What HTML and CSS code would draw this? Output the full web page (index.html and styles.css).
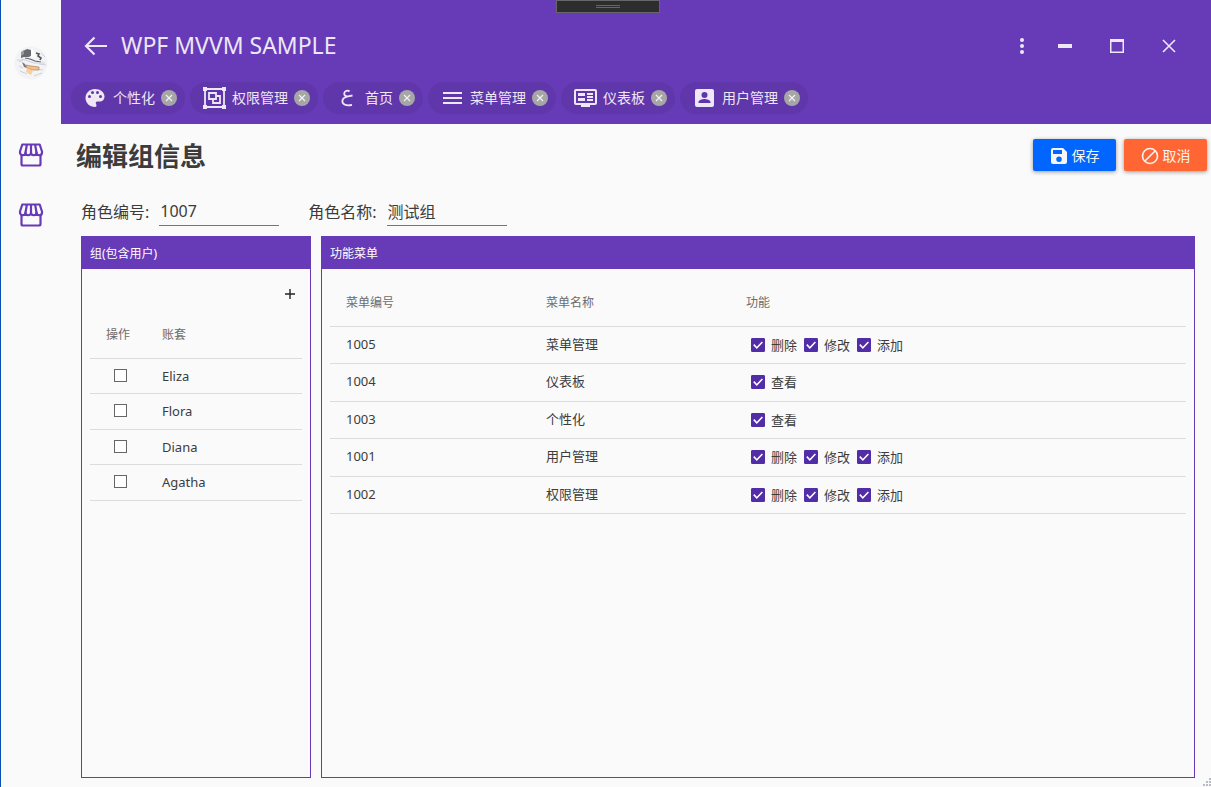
FILE: index.html
```html
<!DOCTYPE html>
<html lang="zh-CN">
<head>
<meta charset="utf-8">
<meta name="viewport" content="width=device-width, initial-scale=1">
<title>WPF MVVM SAMPLE</title>
<link rel="stylesheet" href="styles.css">
</head>
<body>
<svg class="sprite" aria-hidden="true">
  <symbol id="store" viewBox="0 0 26 26">
    <g fill="none" stroke="currentColor" stroke-width="2.200" stroke-linejoin="round" stroke-linecap="round">
      <path d="M4.300 2.500H21.700L24 9.500V10.500A2.750 2.750 0 0 1 18.500 10.500A2.750 2.750 0 0 1 13 10.500A2.750 2.750 0 0 1 7.500 10.500A2.750 2.750 0 0 1 2 10.500V9.500Z"/>
      <path d="M8.800 3L7.500 10.500M13 3V10.500M17.200 3L18.500 10.500M3.500 13V22Q3.500 23.500 5 23.500H21Q22.500 23.500 22.500 22V13"/>
    </g>
  </symbol>
  <symbol id="close" viewBox="0 0 16 16">
    <circle cx="8" cy="8" r="8" fill="#a6a6a6"/>
    <path d="M5 5L11 11M11 5L5 11" stroke="#f2f2f2" stroke-width="1.200" fill="none"/>
  </symbol>
</svg>

<div class="debug-bar"><span class="debug-grip"></span></div>

<div class="shell">
  <nav class="sidebar" aria-label="导航">
    <svg class="avatar" viewBox="0 0 34 34" aria-hidden="true">
      <circle cx="17" cy="17" r="16.500" fill="#f3f3f6"/>
      <path d="M7 9L9 5L13 3L17 4L18 9L15 11L10 11L7 12Z" fill="#6a6b70"/>
      <path d="M7 6L10 4L10 8L7 10Z" fill="#9a9ca2"/>
      <path d="M17 3L20 4L22 12L17 11Z" fill="#fff"/>
      <path d="M11 12L16 13L21 15L27 16" stroke="#5f6167" stroke-width="1.200" fill="none"/>
      <path d="M22 7L25 8L24 10L27 12L26 14" stroke="#55575c" stroke-width="1.600" fill="none"/>
      <path d="M8 16L11 18L13 22L10 21Z" fill="#77787c"/>
      <path d="M3 14L9 14L5 16M8 13L20 17L31 17M5 20L9 22M25 18L32 19M6 25L13 28M20 30L28 27M27 7L31 11M22 23L29 24" stroke="#cdd0dd" stroke-width="1" fill="none"/>
      <path d="M12 19L17 20L25 21V24L19 24L13 22Z" fill="#f8c080" stroke="#a5886b" stroke-width=".700"/>
      <path d="M13 22L19 25L17 29L12 26Z" fill="#f9d09a"/>
    </svg>
    <button class="nav-btn" type="button" aria-label="模块一"><svg><use href="#store"/></svg></button>
    <button class="nav-btn" type="button" aria-label="模块二"><svg><use href="#store"/></svg></button>
  </nav>

  <div class="main">
    <header class="header">
      <div class="title-bar">
        <button class="icon-btn back" type="button" aria-label="返回">
          <svg viewBox="0 0 24 24"><path d="M23 12H2M10.500 3.500L2 12L10.500 20.500" fill="none" stroke="currentColor" stroke-width="2.200"/></svg>
        </button>
        <h1 class="app-title">WPF MVVM SAMPLE</h1>
        <div class="window-controls">
          <button class="icon-btn more" type="button" aria-label="更多"><svg viewBox="0 0 24 24"><g fill="currentColor"><circle cx="12" cy="6" r="2"/><circle cx="12" cy="12" r="2"/><circle cx="12" cy="18" r="2"/></g></svg></button>
          <button class="icon-btn" type="button" aria-label="最小化"><svg viewBox="0 0 24 24"><path d="M5 10H19V14H5Z" fill="currentColor"/></svg></button>
          <button class="icon-btn" type="button" aria-label="最大化"><svg viewBox="0 0 24 24"><path d="M5 5H19V19H5ZM6.500 8V17.500H17.500V8Z" fill="currentColor" fill-rule="evenodd"/></svg></button>
          <button class="icon-btn" type="button" aria-label="关闭"><svg viewBox="0 0 24 24"><path d="M6 6L18 18M18 6L6 18" fill="none" stroke="currentColor" stroke-width="1.600"/></svg></button>
        </div>
      </div>
      <div class="chips">
        <div class="chip">
          <svg class="chip-icon" viewBox="0 0 24 24"><path fill="currentColor" fill-rule="evenodd" d="M12 3C6.500 3 2.500 7 2.500 12S6.800 21 12 21C13 21 13.500 20.200 13.500 19.500C13.500 18.300 12.800 18 12.800 17C12.800 16 13.600 15.500 14.500 15.500H16.500C19.500 15.500 21.500 13.500 21.500 10.500C21.500 6.500 17.500 3 12 3ZM6.500 12A1.500 1.500 0 1 1 6.500 9A1.500 1.500 0 1 1 6.500 12ZM9.500 8A1.500 1.500 0 1 1 9.500 5A1.500 1.500 0 1 1 9.500 8ZM14.500 8A1.500 1.500 0 1 1 14.500 5A1.500 1.500 0 1 1 14.500 8ZM17.500 12A1.500 1.500 0 1 1 17.500 9A1.500 1.500 0 1 1 17.500 12Z"/></svg>
          <span>个性化</span><button class="chip-close" type="button" aria-label="关闭个性化"><svg><use href="#close"/></svg></button>
        </div>
        <div class="chip">
          <svg class="chip-icon" viewBox="0 0 24 24"><g fill="none" stroke="currentColor" stroke-width="1.800"><path d="M3 3H22V21H3Z"/><path d="M7 7H14V13H7Z"/><path d="M14 10H18V17H11V13"/></g><path d="M1 1H5V5H1ZM20 1H24V5H20ZM1 19H5V23H1ZM20 19H24V23H20Z" fill="currentColor"/></svg>
          <span>权限管理</span><button class="chip-close" type="button" aria-label="关闭权限管理"><svg><use href="#close"/></svg></button>
        </div>
        <div class="chip">
          <svg class="chip-icon" viewBox="0 0 24 24"><path d="M14.500 5.500C13 4 9.500 4.500 9.200 7.300C9 9.700 11 10.600 13 10.300L17.500 9.500M13 10.300C9.500 11 7.200 12.900 7.400 15.500C7.600 19 12 20 17 18.800" fill="none" stroke="currentColor" stroke-width="1.800"/></svg>
          <span>首页</span><button class="chip-close" type="button" aria-label="关闭首页"><svg><use href="#close"/></svg></button>
        </div>
        <div class="chip">
          <svg class="chip-icon" viewBox="0 0 24 24"><path d="M3 6H22V8H3ZM3 11H22V13H3ZM3 16H22V18H3Z" fill="currentColor"/></svg>
          <span>菜单管理</span><button class="chip-close" type="button" aria-label="关闭菜单管理"><svg><use href="#close"/></svg></button>
        </div>
        <div class="chip">
          <svg class="chip-icon" viewBox="0 0 24 24"><path fill="currentColor" fill-rule="evenodd" d="M3 3H22Q24 3 24 5V17Q24 19 22 19H17V21H8V19H3Q1 19 1 17V5Q1 3 3 3ZM3 5V17H22V5ZM5 7H12V10H5ZM5 12H12V15H5ZM14 7H20V9H14ZM14 10H20V12H14ZM14 13H20V15H14Z"/></svg>
          <span>仪表板</span><button class="chip-close" type="button" aria-label="关闭仪表板"><svg><use href="#close"/></svg></button>
        </div>
        <div class="chip">
          <svg class="chip-icon" viewBox="0 0 24 24"><path fill="currentColor" fill-rule="evenodd" d="M5 3H20Q22 3 22 5V19Q22 21 20 21H5Q3 21 3 19V5Q3 3 5 3ZM12.500 6A3 3 0 1 0 12.500 12A3 3 0 1 0 12.500 6ZM6.500 17H18.500V16C18.500 14 14.500 13 12.500 13S6.500 14 6.500 16Z"/></svg>
          <span>用户管理</span><button class="chip-close" type="button" aria-label="关闭用户管理"><svg><use href="#close"/></svg></button>
        </div>
      </div>
    </header>

    <main class="page">
      <div class="page-head">
        <h2 class="page-title">编辑组信息</h2>
        <div class="actions">
          <button class="action save" type="button"><svg viewBox="0 0 18 18"><path fill="currentColor" fill-rule="evenodd" d="M3 1H13L17 5V15Q17 17 15 17H3Q1 17 1 15V3Q1 1 3 1ZM3 3V7H12V3ZM9 9.500A2.700 2.700 0 1 0 9 15A2.700 2.700 0 1 0 9 9.500Z"/></svg>保存</button>
          <button class="action cancel" type="button"><svg viewBox="0 0 18 18"><g fill="none" stroke="currentColor" stroke-width="1.600"><circle cx="9" cy="9" r="7.500"/><path d="M3.700 14.300L14.300 3.700"/></g></svg>取消</button>
        </div>
      </div>

      <form class="fields">
        <div class="field"><label for="role-id">角色编号:</label><input id="role-id" type="text" value="1007"></div>
        <div class="field"><label for="role-name">角色名称:</label><input id="role-name" type="text" value="测试组"></div>
      </form>

      <div class="panels">
        <section class="panel users">
          <h3 class="panel-title">组(包含用户)</h3>
          <div class="panel-tools"><button class="add" type="button" aria-label="添加用户"><svg viewBox="0 0 10 10"><path d="M5 0V10M0 5H10" stroke="currentColor" stroke-width="1.400"/></svg></button></div>
          <table class="grid user-grid">
            <thead><tr><th class="col-op">操作</th><th>账套</th></tr></thead>
            <tbody>
              <tr><td><input class="box" id="u1" type="checkbox"></td><td><label for="u1">Eliza</label></td></tr>
              <tr><td><input class="box" id="u2" type="checkbox"></td><td><label for="u2">Flora</label></td></tr>
              <tr><td><input class="box" id="u3" type="checkbox"></td><td><label for="u3">Diana</label></td></tr>
              <tr><td><input class="box" id="u4" type="checkbox"></td><td><label for="u4">Agatha</label></td></tr>
            </tbody>
          </table>
        </section>

        <section class="panel menus">
          <h3 class="panel-title">功能菜单</h3>
          <table class="grid menu-grid">
            <thead><tr><th class="col-menu">菜单编号</th><th class="col-menu">菜单名称</th><th>功能</th></tr></thead>
            <tbody>
              <tr><td>1005</td><td>菜单管理</td><td><div class="perms"><label><input class="tick" type="checkbox" checked>删除</label><label><input class="tick" type="checkbox" checked>修改</label><label><input class="tick" type="checkbox" checked>添加</label></div></td></tr>
              <tr><td>1004</td><td>仪表板</td><td><div class="perms"><label><input class="tick" type="checkbox" checked>查看</label></div></td></tr>
              <tr><td>1003</td><td>个性化</td><td><div class="perms"><label><input class="tick" type="checkbox" checked>查看</label></div></td></tr>
              <tr><td>1001</td><td>用户管理</td><td><div class="perms"><label><input class="tick" type="checkbox" checked>删除</label><label><input class="tick" type="checkbox" checked>修改</label><label><input class="tick" type="checkbox" checked>添加</label></div></td></tr>
              <tr><td>1002</td><td>权限管理</td><td><div class="perms"><label><input class="tick" type="checkbox" checked>删除</label><label><input class="tick" type="checkbox" checked>修改</label><label><input class="tick" type="checkbox" checked>添加</label></div></td></tr>
            </tbody>
          </table>
        </section>
      </div>
    </main>
  </div>
</div>

<svg class="resize-grip" viewBox="0 0 9 9" aria-hidden="true"><path d="M7 0H9V2H7ZM4 3H6V5H4ZM7 3H9V5H7ZM1 6H3V8H1ZM4 6H6V8H4ZM7 6H9V8H7Z" fill="#b9bdc9"/></svg>
</body>
</html>
```
FILE: styles.css
```css
:root {
  --primary: #673ab7;
  --primary-dark: #512da8;
  --on-primary: #ede7f6;
  --paper: #fafafa;
  --text: #3c3c3c;
  --muted: #6c6c6c;
  --line: #dcdcdc;
}

* { box-sizing: border-box; }

body {
  position: relative;
  margin: 0;
  background: var(--paper);
  color: var(--text);
  font: 13px/20px "Noto Sans", "Noto Sans CJK SC", sans-serif;
}

button, input { font: inherit; color: inherit; }

button {
  display: flex;
  align-items: center;
  justify-content: center;
  margin: 0;
  padding: 0;
  border: 0;
  background: none;
  cursor: pointer;
}

h1, h2, h3 { margin: 0; font-weight: 400; }

svg { display: block; flex: none; }

.sprite { position: absolute; width: 0; height: 0; }

.shell { display: flex; min-height: 100vh; }

/* Sidebar */
.sidebar {
  display: flex;
  flex: none;
  flex-direction: column;
  align-items: center;
  width: 61px;
  padding-top: 46px;
  border-left: 1px solid #0a50b4;
  color: var(--primary);
}

.avatar { width: 34px; height: 34px; margin-bottom: 45px; }
.nav-btn { width: 60px; height: 60px; }
.nav-btn svg { width: 26px; height: 26px; }

.main { display: flex; flex: 1; flex-direction: column; min-width: 0; }

/* Header */
.header {
  padding: 22px 16px 10px 10px;
  background: var(--primary);
  color: var(--on-primary);
}

.title-bar { display: flex; align-items: center; height: 48px; margin-bottom: 12px; }
.back { margin: 0 13px; }
.back svg { width: 24px; height: 24px; }
.app-title { padding-bottom: 2px; font-size: 23px; line-height: 32px; }
.window-controls { display: flex; margin-left: auto; }
.window-controls .icon-btn { width: 52px; height: 48px; }
.window-controls .more { width: 34px; }
.window-controls svg { width: 24px; height: 24px; }

.chips { display: flex; flex-wrap: wrap; gap: 5px; }

.chip {
  display: flex;
  align-items: center;
  gap: 6px;
  height: 32px;
  padding: 0 8px 0 12px;
  border-radius: 16px;
  background: #6037aa;
  font-size: 14px;
}

.chip-icon { width: 24px; height: 24px; }
.chip-close svg { width: 16px; height: 16px; }

/* Page */
.page { display: flex; flex: 1; flex-direction: column; }

.page-head {
  display: flex;
  align-items: center;
  justify-content: space-between;
  padding: 12px 4px 0 15px;
}

.page-title { font-size: 26px; line-height: 40px; font-weight: 700; }
.actions { display: flex; gap: 8px; padding-bottom: 2px; }

.action {
  gap: 4px;
  width: 83px;
  height: 32px;
  padding-top: 1px;
  border-radius: 2px;
  color: #f5f5f5;
  font-size: 14px;
  box-shadow: 0 1px 4px rgba(0, 0, 0, .4);
}

.action svg { width: 18px; height: 18px; }
.save { background: #0066ff; }
.cancel { background: #ff6633; }

.fields { display: flex; gap: 29px; padding: 22px 20px 10px; font-size: 16px; }
.field { display: flex; align-items: center; gap: 10px; }
.field label { line-height: 24px; }

.field input {
  width: 120px;
  height: 28px;
  padding: 0 1px 2px;
  border: 0;
  border-bottom: 1px solid #757575;
  border-radius: 0;
  background: none;
  outline: 0;
}

.panels { display: flex; flex: 1; gap: 10px; padding: 0 16px 9px 20px; }

.panel {
  display: flex;
  flex-direction: column;
  border: 1px solid var(--primary);
}

.users { flex: none; width: 230px; }
.menus { flex: 1; min-width: 0; }

.panel-title {
  padding: 7px 8px 5px;
  background: var(--primary);
  color: #fff;
  font-size: 12px;
  line-height: 20px;
}

.panel-tools { display: flex; justify-content: flex-end; padding: 15px 14px 7px; }
.add { width: 12px; height: 20px; color: #222; }
.add svg { width: 10px; height: 10px; }

/* Tables */
.grid {
  margin: 0 8px;
  border-spacing: 0;
  table-layout: fixed;
}

.grid th, .grid td {
  padding: 0 16px;
  border-bottom: 1px solid var(--line);
  text-align: left;
}

.grid th { color: var(--muted); font-size: 12px; font-weight: 400; }
.grid td { padding-top: 7px; vertical-align: top; }
.user-grid th { height: 48px; }
.menu-grid { margin-top: 8px; }
.menu-grid th { height: 50px; padding-top: 2px; }
.user-grid td { height: 35px; }
.user-grid tr:nth-child(even) td { height: 36px; }
.menu-grid td { height: 37px; }
.menu-grid tr:nth-child(even) td { height: 38px; }
.col-op { width: 56px; }
.col-menu { width: 200px; }
.grid .col-op { padding-right: 0; }
.user-grid td:first-child { padding: 10px 0 0 24px; }

.box, .tick { display: block; flex: none; margin: 0; appearance: none; }
.box { width: 13px; height: 13px; border: 1px solid #666; background: #fff; }
.box:checked { background: var(--primary-dark); }

.tick {
  width: 14px;
  height: 14px;
  border: 1px solid var(--primary-dark);
  border-radius: 1px;
}

.tick:checked { background: var(--primary-dark); }

.tick:checked::after {
  display: block;
  width: 12px;
  height: 12px;
  background: #fff;
  clip-path: polygon(10% 52%, 20% 42%, 40% 64%, 82% 20%, 91% 29%, 40% 84%);
  content: "";
}

.perms { display: flex; gap: 7px; padding: 1px 0 0 5px; }
.perms label { display: flex; align-items: center; gap: 6px; }

/* Overlays */
.debug-bar {
  position: absolute;
  top: 0;
  left: calc(50% - 50px);
  display: flex;
  align-items: center;
  justify-content: center;
  width: 104px;
  height: 13px;
  border: 1px solid #666;
  background: #2d2d30;
}

.debug-grip { width: 24px; height: 3px; border: solid #666; border-width: 1px 0; }

.resize-grip { position: absolute; right: 0; bottom: 0; width: 9px; height: 9px; }
```
